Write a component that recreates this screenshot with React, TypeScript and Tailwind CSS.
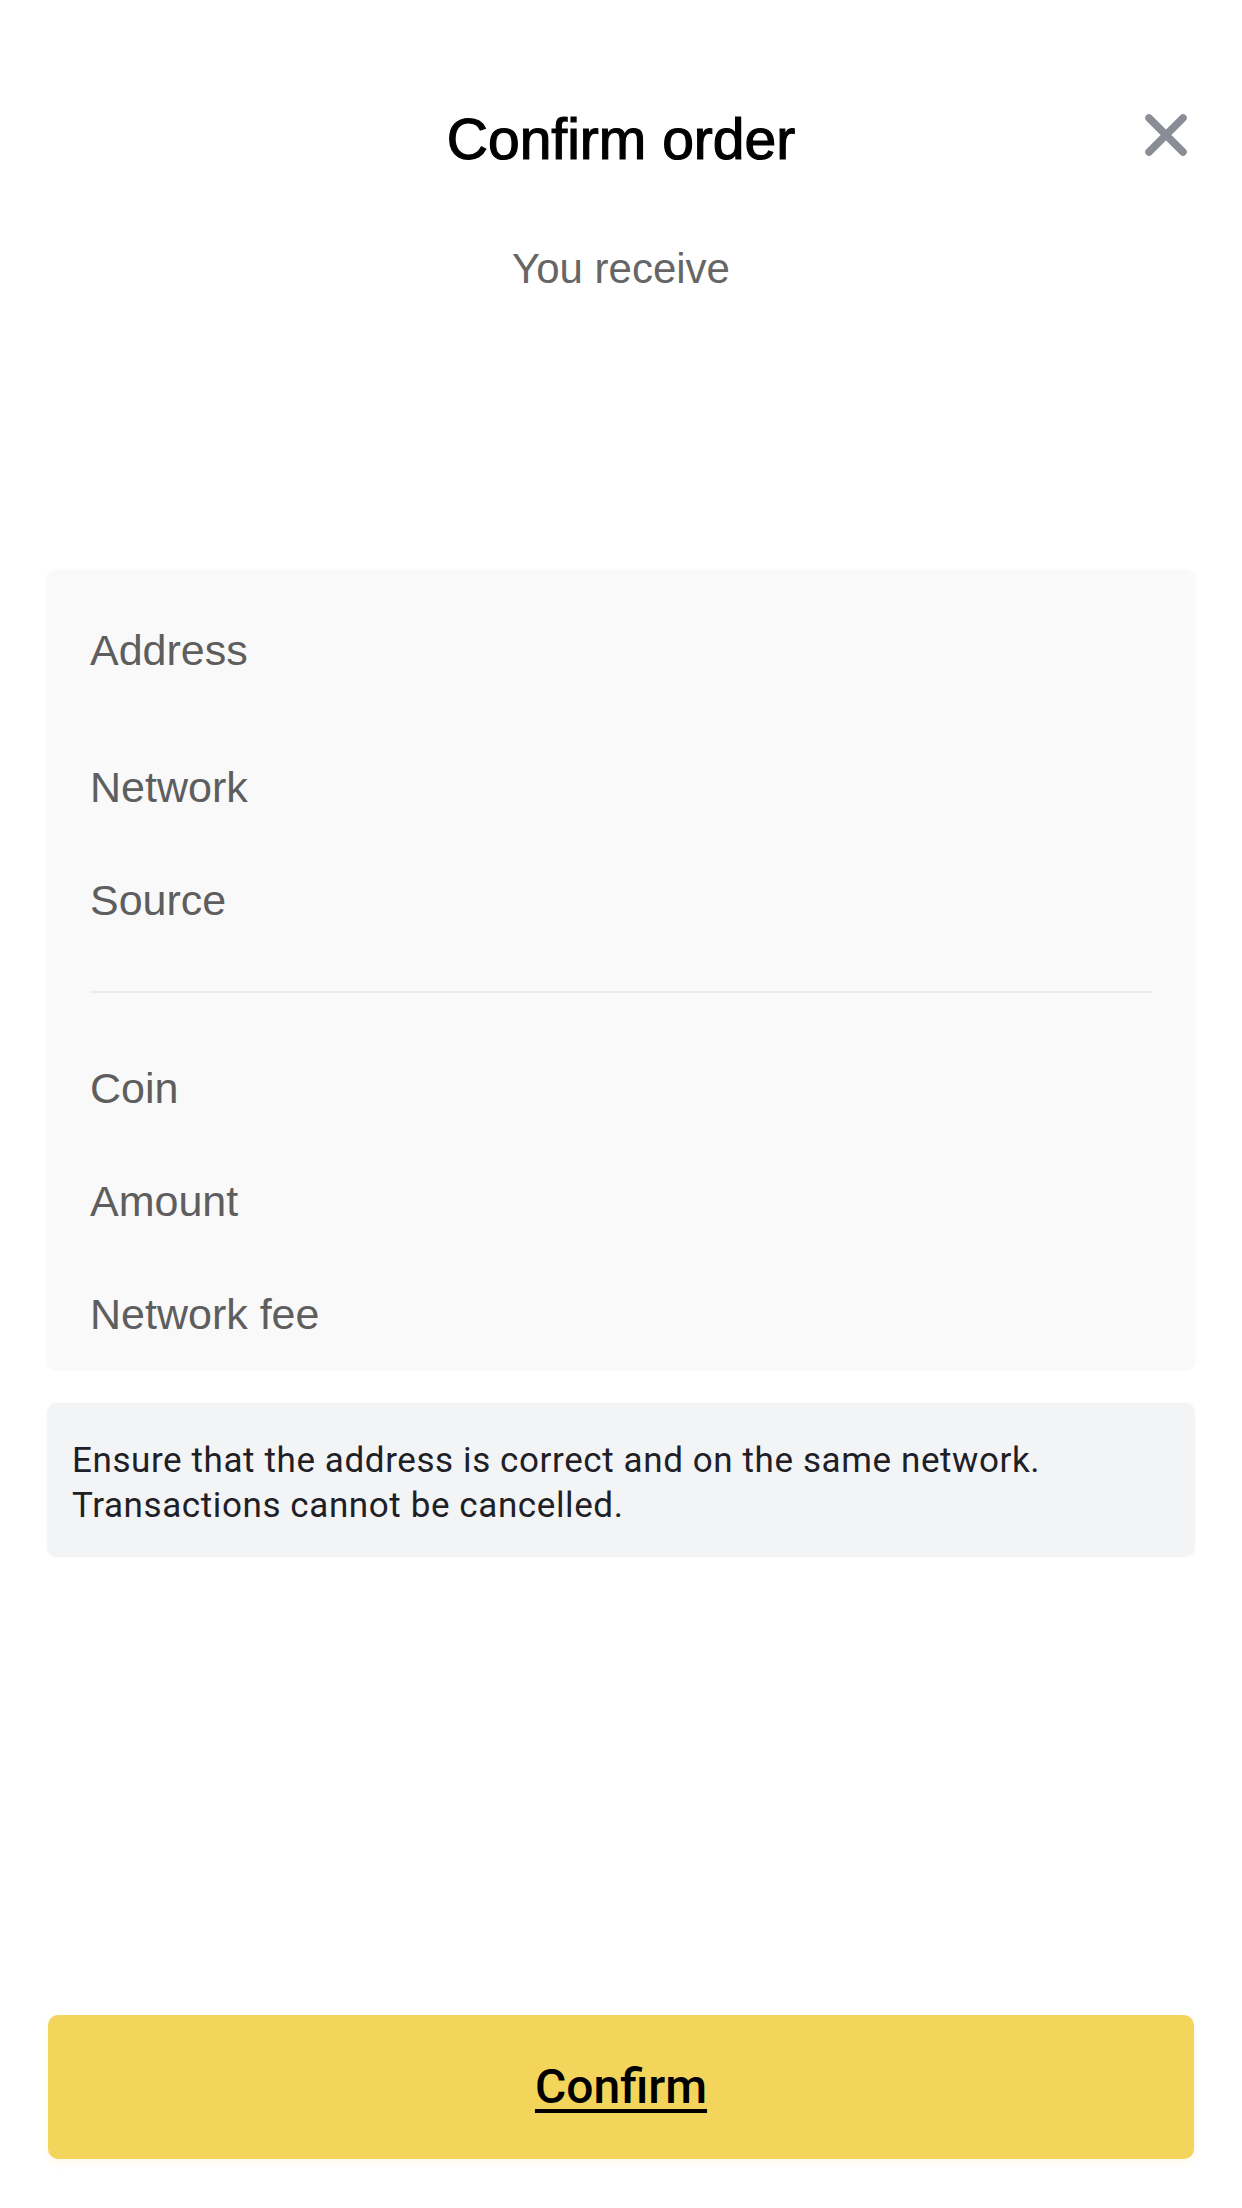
const labelsBottom = ['Coin', 'Amount', 'Network fee'];

const CloseIcon = () => (
  <svg width="44" height="44" viewBox="0 0 44 44" fill="none">
    <path d="M5 5L39 39M39 5L5 39" stroke="#8a8d95" strokeWidth="7.5" strokeLinecap="round" />
  </svg>
);

const Label = ({ children }: { children: string }) => (
  <span className="text-[43px] leading-[48px] text-[#5e5e5e]">{children}</span>
);

const App = () => {
  return (
    <main className="flex h-[2208px] w-[1242px] flex-col bg-white font-['Liberation_Sans',Arial,sans-serif]">
      <header className="grid grid-cols-[1fr_auto_1fr] items-center pt-[107px]">
        <div />
        <h1 className="text-[57px] leading-[64px] text-black [-webkit-text-stroke:1.2px_black]">Confirm order</h1>
        <div className="flex justify-end pr-[54px]">
          <button className="mt-[-8px] flex h-[44px] w-[44px] items-center justify-center">
            <CloseIcon />
          </button>
        </div>
      </header>

      <p className="mt-[74px] text-center text-[42px] leading-[48px] text-[#666666]">You receive</p>

      <section className="mx-[47px] mt-[277px] rounded-[10px] bg-[#f9f9f9] px-[43px] pt-[24px] shadow-[0_0_4px_rgba(0,0,0,0.04)]">
        <div className="flex h-[137px] items-start pt-[32px]">
          <Label>Address</Label>
        </div>
        <div className="flex h-[112px] items-center">
          <Label>Network</Label>
        </div>
        <div className="flex h-[113px] items-center">
          <Label>Source</Label>
        </div>
        <div className="mt-[35px] h-[2px] bg-[#ececec]" />
        <div className="mt-[38px]">
          {labelsBottom.map((label) => (
            <div key={label} className="flex h-[113px] items-center">
              <Label>{label}</Label>
            </div>
          ))}
        </div>
      </section>

      <div className="mx-[47px] mt-[33px] h-[154px] rounded-[10px] bg-[#f3f4f6] pt-[35px] pl-[25px] font-['Roboto',sans-serif] text-[35px] leading-[45px] tracking-[0.6px] text-[#1e2026] shadow-[0_0_3px_rgba(0,0,0,0.04)]">
        <p>Ensure that the address is correct and on the same network.</p>
        <p>Transactions cannot be cancelled.</p>
      </div>

      <div className="flex-1" />

      <div className="px-[48px] pb-[49px]">
        <button className="flex h-[144px] w-full items-center justify-center rounded-[10px] bg-[#f3d55b] shadow-[0_4px_10px_rgba(243,213,91,0.12)]">
          <span className="font-['Roboto',sans-serif] text-[48px] font-medium text-black underline decoration-[4px] underline-offset-[6px]">
            Confirm
          </span>
        </button>
      </div>
    </main>
  );
};

export default App;
